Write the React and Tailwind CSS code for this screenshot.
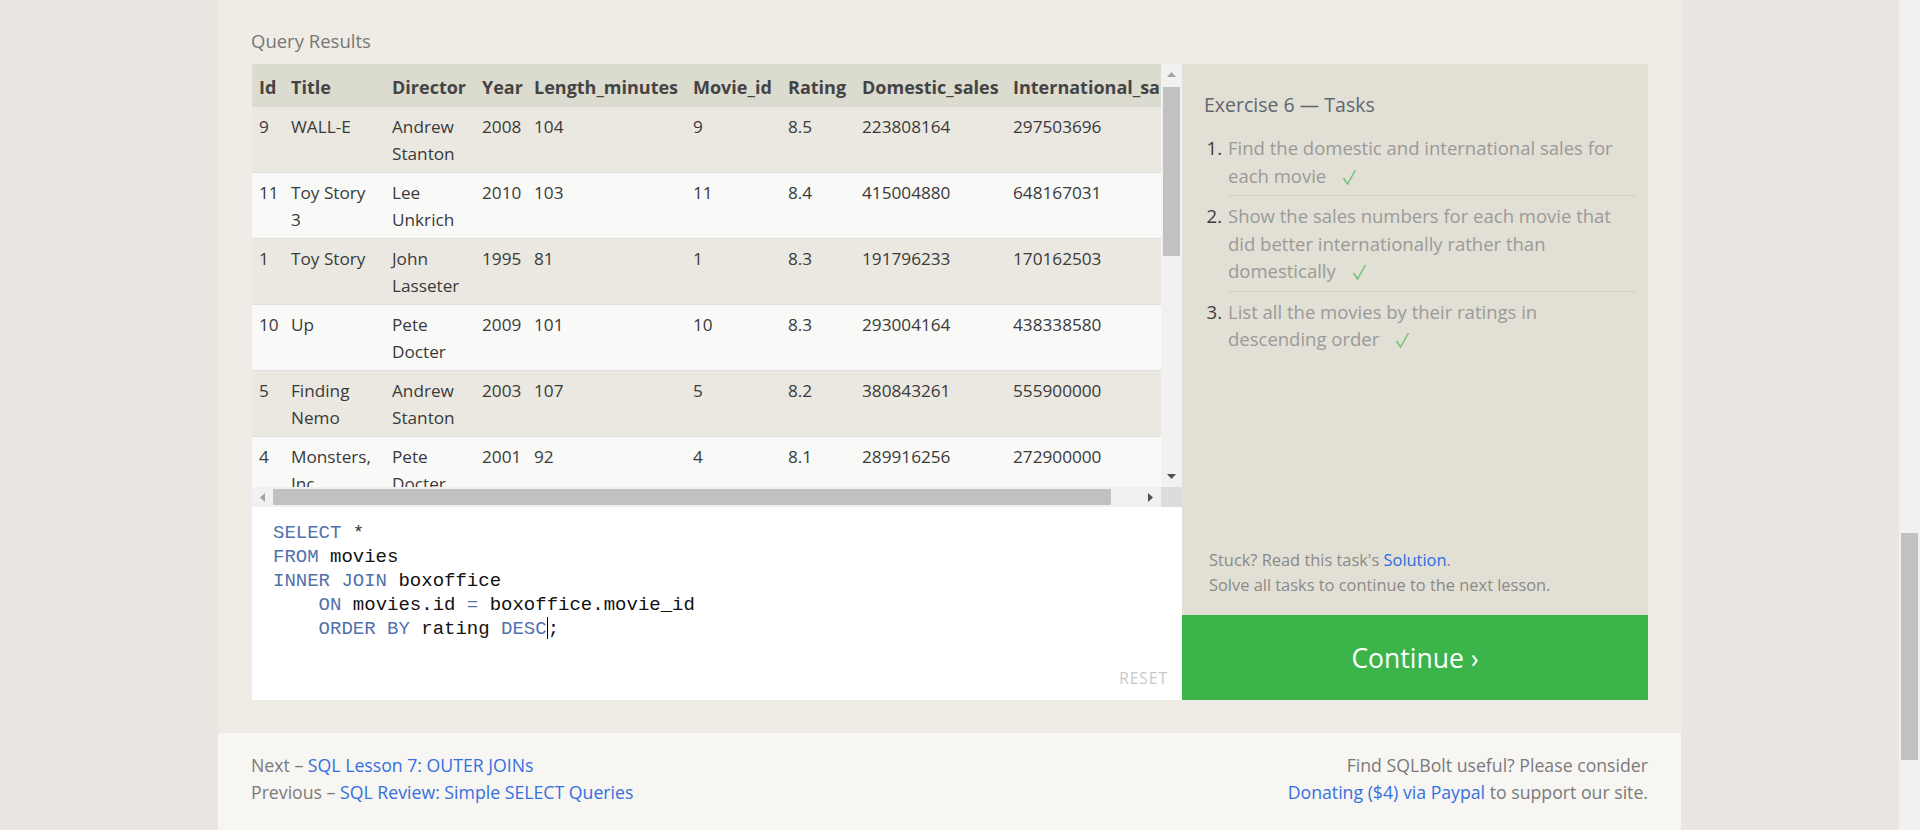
import React from "react";

const cols = [
  { h: "Id", w: "w-[33px]" },
  { h: "Title", w: "w-[101px]" },
  { h: "Director", w: "w-[90px]" },
  { h: "Year", w: "w-[52px]" },
  { h: "Length_minutes", w: "w-[159px]" },
  { h: "Movie_id", w: "w-[95px]" },
  { h: "Rating", w: "w-[74px]" },
  { h: "Domestic_sales", w: "w-[151px]" },
  { h: "International_sales", w: "w-[180px]" },
];

const rows = [
  [9, "WALL-E", "Andrew Stanton", 2008, 104, 9, 8.5, 223808164, 297503696],
  [11, "Toy Story 3", "Lee Unkrich", 2010, 103, 11, 8.4, 415004880, 648167031],
  [1, "Toy Story", "John Lasseter", 1995, 81, 1, 8.3, 191796233, 170162503],
  [10, "Up", "Pete Docter", 2009, 101, 10, 8.3, 293004164, 438338580],
  [5, "Finding Nemo", "Andrew Stanton", 2003, 107, 5, 8.2, 380843261, 555900000],
  [4, "Monsters, Inc.", "Pete Docter", 2001, 92, 4, 8.1, 289916256, 272900000],
  [3, "A Bug's Life", "John Lasseter", 1998, 95, 3, 7.9, 162798565, 200600000],
];

function Tri({ dir, color }) {
  const pts = {
    up: "0,5 4.5,0 9,5",
    down: "0,0 9,0 4.5,5",
    left: "5,0 5,9 0,4.5",
    right: "0,0 0,9 5,4.5",
  }[dir];
  const vert = dir === "up" || dir === "down";
  return (
    <svg width={vert ? 9 : 5} height={vert ? 5 : 9} viewBox={vert ? "0 0 9 5" : "0 0 5 9"}>
      <polygon points={pts} fill={color} />
    </svg>
  );
}

function Check() {
  return (
    <svg className="ml-[16px] inline-block align-[-2px]" width="15" height="16" viewBox="0 0 15 16">
      <polyline points="1.5,9 5.5,15 13.5,1" fill="none" stroke="#72c476" strokeWidth="1.5" />
    </svg>
  );
}

const K = ({ children }) => <span className="text-[#5271ac]">{children}</span>;

function Task({ n, children, last }) {
  return (
    <li className="flex">
      <span className="w-[24px] shrink-0 pr-[6px] pt-[6px] text-right text-[#3c3c3c]">{n}.</span>
      <div className={"flex-1 py-[6px] text-[#9a9a9a] " + (last ? "" : "border-b border-[#d3d0c4]")}>
        {children}
        <Check />
      </div>
    </li>
  );
}

export default function App() {
  return (
    <div className="flex h-[830px] w-full overflow-hidden bg-[#ebe6e2] font-['Open_Sans',sans-serif]">
      <div className="min-w-0 flex-1">
        <div className="mx-auto w-[1463px]">
          <section className="rounded-b-[4px] bg-[#efece5] pb-[33px] pl-[34px] pr-[33px] pt-[27px]">
            <div className="-ml-px mb-[9px] text-[18.5px] leading-[28px] text-[#777777]">Query Results</div>
            <div className="flex h-[636px]">
              <div className="flex w-[930px] flex-col">
                <div className="grid grid-cols-[909px_21px] grid-rows-[423px_20px]">
                  <div className="overflow-hidden">
                    <table className="w-[935px] table-fixed border-collapse text-left text-[17.2px] leading-[27px] text-[#3a3a3a]">
                      <colgroup>
                        {cols.map((c) => (
                          <col key={c.h} className={c.w} />
                        ))}
                      </colgroup>
                      <thead>
                        <tr className="bg-[#dcdbcf]">
                          {cols.map((c, i) => (
                            <th
                              key={c.h}
                              className={
                                "whitespace-nowrap pb-[6px] pt-[9px] text-[18px] font-bold leading-[28px] text-[#444444] " +
                                (i === 0 ? "pl-[7px]" : "pl-[6px]")
                              }
                            >
                              {c.h}
                            </th>
                          ))}
                        </tr>
                      </thead>
                      <tbody>
                        {rows.map((r, ri) => (
                          <tr key={ri} className={ri % 2 === 0 ? "bg-[#eae8e1]" : "bg-[#f9f9f8]"}>
                            {r.map((v, ci) => (
                              <td
                                key={ci}
                                className={
                                  "border-b border-[#dedede] pb-[5px] pr-[9px] pt-[6px] align-top " +
                                  (ci === 0 ? "pl-[7px]" : "pl-[6px]")
                                }
                              >
                                {v}
                              </td>
                            ))}
                          </tr>
                        ))}
                      </tbody>
                    </table>
                  </div>
                  <div className="flex flex-col bg-[#f1f1f1]">
                    <div className="flex h-[21px] items-center justify-center">
                      <Tri dir="up" color="#a3a3a3" />
                    </div>
                    <div className="mx-[2px] mt-[2px] h-[169px] bg-[#c1c1c1]" />
                    <div className="flex-1" />
                    <div className="flex h-[21px] items-center justify-center">
                      <Tri dir="down" color="#505050" />
                    </div>
                  </div>
                  <div className="flex bg-[#f1f1f1]">
                    <div className="flex w-[21px] items-center justify-center">
                      <Tri dir="left" color="#a3a3a3" />
                    </div>
                    <div className="my-[2px] w-[838px] bg-[#c1c1c1]" />
                    <div className="flex-1" />
                    <div className="flex w-[21px] items-center justify-center">
                      <Tri dir="right" color="#505050" />
                    </div>
                  </div>
                  <div className="bg-[#dcdcdc]" />
                </div>
                <div className="relative flex-1 bg-white pl-[21px] pt-[14px]">
                  <pre className="whitespace-pre font-['Liberation_Mono',monospace] text-[19px] leading-[24px] text-[#111111]">
                    <K>SELECT</K> <span className="text-[#333333]">*</span>
                    {"\n"}
                    <K>FROM</K> movies
                    {"\n"}
                    <K>INNER JOIN</K> boxoffice
                    {"\n"}
                    {"    "}
                    <K>ON</K> movies.id <K>=</K> boxoffice.movie_id
                    {"\n"}
                    {"    "}
                    <K>ORDER BY</K> rating <K>DESC</K>
                    <span className="inline-block h-[22px] w-px bg-black align-[-5px]" />;
                  </pre>
                  <div className="absolute bottom-[12px] right-[14px] text-[15.5px] leading-[20px] tracking-[1px] text-[#c8c8c8]">
                    RESET
                  </div>
                </div>
              </div>
              <div className="flex w-[466px] flex-col bg-[#e2dfd4]">
                <div className="flex-1 pl-[22px] pr-[11px] pt-[27px]">
                  <div className="text-[19.5px] leading-[28px] text-[#5f6770]">Exercise 6 — Tasks</div>
                  <ol className="mt-[9px] text-[18.5px] leading-[27.5px]">
                    <Task n={1}>Find the domestic and international sales for each movie</Task>
                    <Task n={2}>Show the sales numbers for each movie that did better internationally rather than domestically</Task>
                    <Task n={3} last>
                      List all the movies by their ratings in descending order
                    </Task>
                  </ol>
                </div>
                <div className="pb-[18px] pl-[27px] text-[16.4px] leading-[25px] text-[#8a8a8a]">
                  <div>
                    Stuck? Read this task's <span className="text-[#2b6de0]">Solution</span>.
                  </div>
                  <div>Solve all tasks to continue to the next lesson.</div>
                </div>
                <div className="flex h-[85px] items-center justify-center bg-[#3bb54a] pt-[2px] text-[26.5px] text-white">
                  Continue ›
                </div>
              </div>
            </div>
          </section>
          <footer className="flex h-[97px] justify-between bg-[#f7f6f2] px-[33px] pt-[19px] text-[17.7px] leading-[27px] text-[#7a7a7a]">
            <div>
              <div>
                Next – <span className="text-[#3470df]">SQL Lesson 7: OUTER JOINs</span>
              </div>
              <div>
                Previous – <span className="text-[#3470df]">SQL Review: Simple SELECT Queries</span>
              </div>
            </div>
            <div className="text-right">
              <div>Find SQLBolt useful? Please consider</div>
              <div>
                <span className="text-[#3470df]">Donating ($4) via Paypal</span> to support our site.
              </div>
            </div>
          </footer>
        </div>
      </div>
      <div className="flex w-[21px] flex-col bg-[#f1f1f1] pt-[533px]">
        <div className="mx-[2px] h-[227px] bg-[#c1c1c1]" />
      </div>
    </div>
  );
}
